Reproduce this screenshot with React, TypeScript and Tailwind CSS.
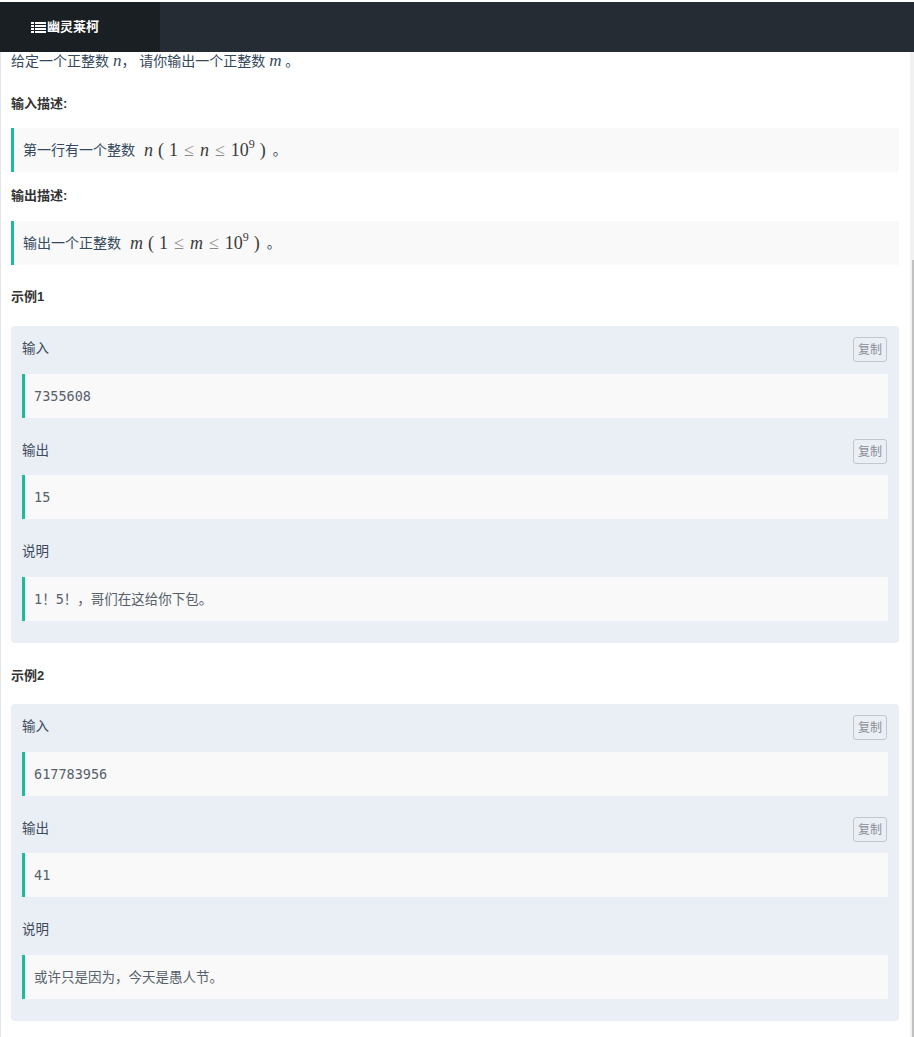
const sans = 'font-["Helvetica_Neue","Liberation_Sans","Noto_Sans_CJK_SC",sans-serif]';
const mono = 'font-["DejaVu_Sans_Mono","Noto_Sans_CJK_SC",monospace]';

function ListIcon() {
  return (
    <svg width="15" height="11" viewBox="0 0 15 11" fill="white">
      {[0, 3, 6, 9].map((y) => (
        <g key={y}>
          <rect x="0" y={y} width="3" height="2" />
          <rect x="4" y={y} width="11" height="2" />
        </g>
      ))}
    </svg>
  );
}

function Math({ v }: { v: string }) {
  return (
    <span className='ml-[9px] font-["Liberation_Serif",serif] text-[18px] text-[#3a3a3a]'>
      <span className="italic">{v}</span>
      <span className="ml-[5px] mr-[5px]">(</span>
      <span>1</span>
      <span className="mx-[6px] text-[#8a8a8a]">≤</span>
      <span className="italic">{v}</span>
      <span className="mx-[6px] text-[#8a8a8a]">≤</span>
      <span>10</span>
      <sup className="-top-[0.6em] text-[12px]">9</sup>
      <span className="ml-[5px]">)</span>
    </span>
  );
}

function Quote({ children, code }: { children: React.ReactNode; code?: boolean }) {
  return (
    <div
      className={`flex h-[44px] items-center border-l-[3px] border-[#1abc9c] bg-[#f9f9f9] pl-[9px] ${
        code ? `${mono} text-[13.5px] text-[#56606b]` : 'text-[14px] text-[#34495e]'
      }`}
    >
      {children}
    </div>
  );
}

function Section({ label, copy, children, gap }: { label: string; copy?: boolean; children: React.ReactNode; gap: string }) {
  return (
    <div>
      <div className={`${gap} flex h-[25px] items-center justify-between`}>
        <span className="text-[13.5px] text-[#3c4b5c]">{label}</span>
        {copy && (
          <button className="mr-[1px] h-[25px] w-[34px] rounded-[3px] border border-[#c3c7cc] text-[12px] text-[#8a8f96]">
            复制
          </button>
        )}
      </div>
      {children}
    </div>
  );
}

function Sample({ title, input, output, note, top, bottom }: { title: string; input: string; output: string; note: React.ReactNode; top: string; bottom: string }) {
  return (
    <>
      <h3 className={`${top} ${bottom} text-[13px] font-bold leading-[20px] text-[#333]`}>{title}</h3>
      <div className="rounded-[4px] bg-[#eaeef5] px-[11px] pb-[22px] pt-[11px]">
        <Section label="输入" copy gap="mb-[12px]">
          <Quote code>{input}</Quote>
        </Section>
        <div className="mt-[21px]">
          <Section label="输出" copy gap="mb-[11px]">
            <Quote code>{output}</Quote>
          </Section>
        </div>
        <div className="mt-[21px]">
          <Section label="说明" gap="mb-[12px]">
            <Quote code>{note}</Quote>
          </Section>
        </div>
      </div>
    </>
  );
}

export default function App() {
  return (
    <div className={`${sans} h-[1037px] overflow-hidden bg-white pt-[2px]`}>
      <header className="flex h-[50px] bg-[#252c33]">
        <div className="flex w-[160px] items-center gap-[1px] bg-[#1a1f23] pl-[31px] text-[13px] font-bold text-white">
          <ListIcon />
          <span>幽灵莱柯</span>
        </div>
      </header>
      <div className="flex h-[985px] border-l border-[#e3e5ea]">
        <main className="flex-1 pl-[10px] pr-[11px]">
          <p className="text-[14px] leading-[18px] text-[#34495e]">
            给定一个正整数 <span className='font-["Liberation_Serif",serif] text-[17px] italic'>n</span>， 请你输出一个正整数{' '}
            <span className='font-["Liberation_Serif",serif] text-[17px] italic'>m</span> 。
          </p>
          <h3 className="mb-[14px] mt-[24px] text-[13px] font-bold leading-[20px] text-[#333]">输入描述:</h3>
          <Quote>
            第一行有一个整数<Math v="n" />
            <span className="ml-[7px]">。</span>
          </Quote>
          <h3 className="mb-[15px] mt-[14px] text-[13px] font-bold leading-[20px] text-[#333]">输出描述:</h3>
          <Quote>
            输出一个正整数<Math v="m" />
            <span className="ml-[7px]">。</span>
          </Quote>
          <Sample title="示例1" top="mt-[22px]" bottom="mb-[19px]" input="7355608" output="15" note="1！5！，哥们在这给你下包。" />
          <Sample title="示例2" top="mt-[23px]" bottom="mb-[18px]" input="617783956" output="41" note="或许只是因为，今天是愚人节。" />
        </main>
        <div className="flex w-[4px] flex-col bg-[#f1f1f1]">
          <div className="h-[208px]" />
          <div className="ml-[2px] flex-1 bg-[#c1c1c1]" />
        </div>
      </div>
    </div>
  );
}
